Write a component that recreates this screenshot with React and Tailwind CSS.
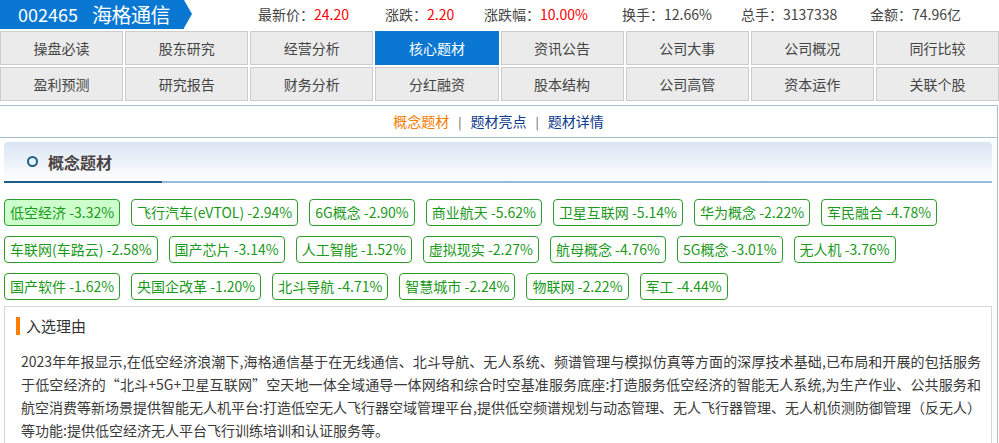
import React from "react";

const tabRows = [
  ["操盘必读", "股东研究", "经营分析", "核心题材", "资讯公告", "公司大事", "公司概况", "同行比较"],
  ["盈利预测", "研究报告", "财务分析", "分红融资", "股本结构", "公司高管", "资本运作", "关联个股"],
];

const stats = [
  { label: "最新价", value: "24.20", w: "w-[127px]" },
  { label: "涨跌", value: "2.20", w: "w-[99px]" },
  { label: "涨跌幅", value: "10.00%", w: "w-[138px]" },
  { label: "换手", value: "12.66%", w: "w-[119px]", plain: true },
  { label: "总手", value: "3137338", w: "w-[129px]", plain: true },
  { label: "金额", value: "74.96亿", w: "w-[120px]", plain: true },
];

const concepts = [
  { name: "低空经济", chg: "-3.32%", active: true },
  { name: "飞行汽车(eVTOL)", chg: "-2.94%" },
  { name: "6G概念", chg: "-2.90%" },
  { name: "商业航天", chg: "-5.62%" },
  { name: "卫星互联网", chg: "-5.14%" },
  { name: "华为概念", chg: "-2.22%" },
  { name: "军民融合", chg: "-4.78%" },
  { name: "车联网(车路云)", chg: "-2.58%" },
  { name: "国产芯片", chg: "-3.14%" },
  { name: "人工智能", chg: "-1.52%" },
  { name: "虚拟现实", chg: "-2.27%" },
  { name: "航母概念", chg: "-4.76%" },
  { name: "5G概念", chg: "-3.01%" },
  { name: "无人机", chg: "-3.76%" },
  { name: "国产软件", chg: "-1.62%" },
  { name: "央国企改革", chg: "-1.20%" },
  { name: "北斗导航", chg: "-4.71%" },
  { name: "智慧城市", chg: "-2.24%" },
  { name: "物联网", chg: "-2.22%" },
  { name: "军工", chg: "-4.44%" },
];

const reason =
  "2023年年报显示,在低空经济浪潮下,海格通信基于在无线通信、北斗导航、无人系统、频谱管理与模拟仿真等方面的深厚技术基础,已布局和开展的包括服务于低空经济的“北斗+5G+卫星互联网”空天地一体全域通导一体网络和综合时空基准服务底座:打造服务低空经济的智能无人系统,为生产作业、公共服务和航空消费等新场景提供智能无人机平台:打造低空无人飞行器空域管理平台,提供低空频谱规划与动态管理、无人飞行器管理、无人机侦测防御管理（反无人）等功能:提供低空经济无人平台飞行训练培训和认证服务等。";

const App = () => {
  return (
    <div className="w-[999px] h-[443px] overflow-hidden bg-white font-['Noto_Sans_CJK_SC',sans-serif] text-[#333]">
      {/* Stock header */}
      <div className="flex items-center h-[29px]">
        <div className="flex h-full">
          <div className="flex items-center w-[184px] h-full bg-[#0a78d2] text-white pl-[18px]">
            <span className="text-[18px] w-[74px]">002465</span>
            <span className="text-[20px] tracking-[-0.5px]">海格通信</span>
          </div>
          <div className="w-0 h-0 border-y-[14.5px] border-y-transparent border-l-[8px] border-l-[#0a78d2]" />
        </div>
        <div className="flex items-center ml-[66px] text-[14px]">
          {stats.map((s) => (
            <div key={s.label} className={`${s.w} whitespace-nowrap`}>
              <span className="text-[#444]">{s.label}：</span>
              <span className={s.plain ? "text-[#444]" : "text-[#ff0000]"}>{s.value}</span>
            </div>
          ))}
        </div>
      </div>

      {/* Tabs */}
      <div className="mt-[2px] flex flex-col gap-[2px]">
        {tabRows.map((row, ri) => (
          <div key={ri} className="grid grid-cols-8 gap-[2px]">
            {row.map((t) => {
              const active = t === "核心题材";
              return (
                <div
                  key={t}
                  className={`h-[34px] flex items-center justify-center text-[14px] border ${
                    active
                      ? "bg-[#0a78d2] border-[#0a78d2] text-white"
                      : "bg-[#ebebeb] border-[#cccccc] text-[#444]"
                  }`}
                >
                  {t}
                </div>
              );
            })}
          </div>
        ))}
      </div>

      {/* Main box */}
      <div className="mt-[4px] w-[998px] border-t border-r border-[#a3bfd1] h-[400px]">
        <div className="h-[32px] border-b border-[#a3bfd1] flex items-center justify-center text-[14px]">
          <span className="text-[#f57c00]">概念题材</span>
          <span className="mx-[9px] text-[#555] text-[12px]">|</span>
          <span className="text-[#0b3a8c]">题材亮点</span>
          <span className="mx-[9px] text-[#555] text-[12px]">|</span>
          <span className="text-[#0b3a8c]">题材详情</span>
        </div>

        {/* Section title */}
        <div className="ml-[4px] mt-[4px] w-[988px]">
          <div className="h-[39px] rounded-t-[4px] bg-gradient-to-b from-[#dae5f3] to-[#ffffff] flex items-center pl-[23px]">
            <div className="w-[11px] h-[11px] rounded-full border-[2px] border-[#1d5f8a]" />
            <span className="ml-[10px] text-[16px] font-bold text-[#4a4343]">概念题材</span>
          </div>
          <div className="flex h-[2px]">
            <div className="w-[158px] bg-[#1b5e8a]" />
            <div className="flex-1 bg-[#92bcd8]" />
          </div>
        </div>

        {/* Concept tags */}
        <div className="ml-[4px] mt-[16px] w-[988px] flex flex-wrap gap-x-[11px] gap-y-[10px]">
          {concepts.map((c) => (
            <div
              key={c.name}
              className={`h-[27px] px-[5px] flex items-center border border-[#2a9f2a] rounded-[4px] text-[14px] text-[#1a991a] whitespace-nowrap ${
                c.active ? "bg-[#ccffcc]" : "bg-white"
              }`}
            >
              {c.name} {c.chg}
            </div>
          ))}
        </div>

        {/* Reason */}
        <div className="ml-[4px] mt-[6px] w-[988px] border border-[#d6d6d6] pt-[10px] pl-[11px] pb-[10px]">
          <div className="flex items-center h-[18px]">
            <div className="w-[4px] h-[18px] bg-[#ff8000]" />
            <span className="ml-[6px] text-[15px] text-[#333]">入选理由</span>
          </div>
          <p className="mt-[15px] ml-[5px] w-[960px] text-[14px] leading-[23px] text-[#3a3a3a] text-justify">
            {reason}
          </p>
        </div>
      </div>
    </div>
  );
};

export default App;
